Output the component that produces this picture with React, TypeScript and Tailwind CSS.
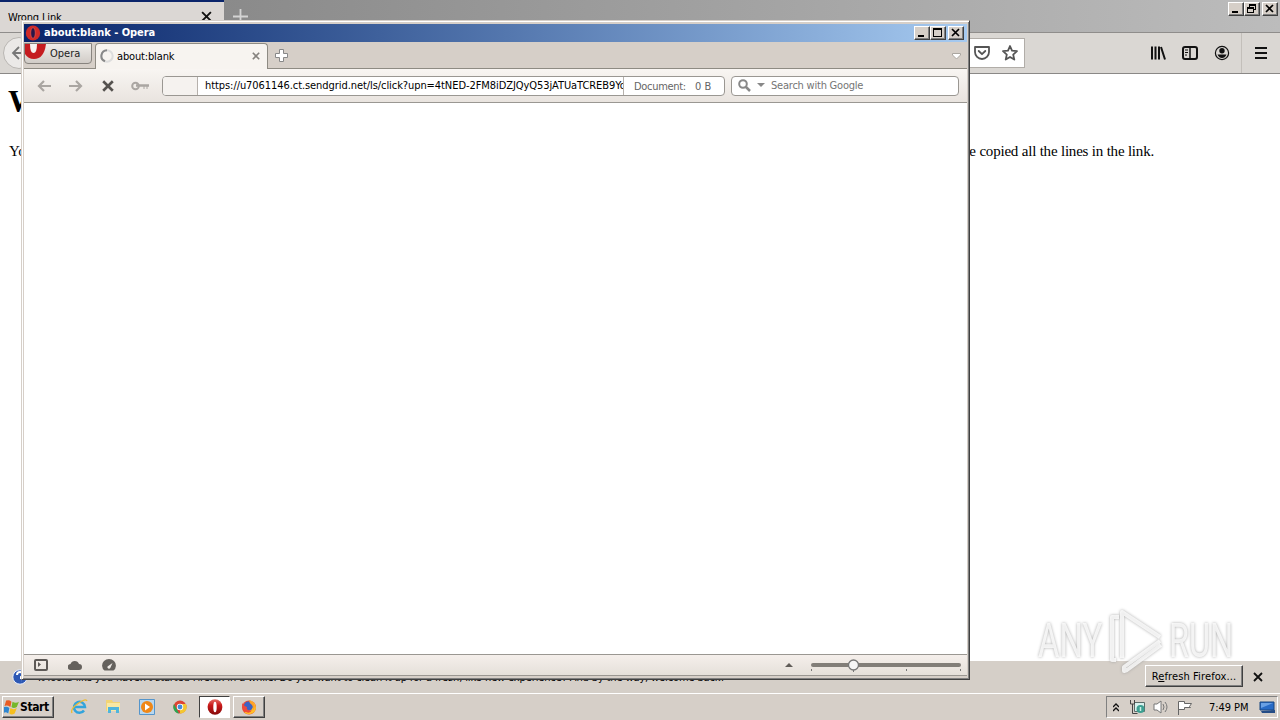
import React from "react";

const ui = "font-['DejaVu_Sans_Condensed','DejaVu_Sans',sans-serif] text-[11px] leading-[14px] whitespace-nowrap";

function CaptionButton({ kind, className = "" }: { kind: "min" | "max" | "restore" | "close"; className?: string }) {
  return (
    <span className={`block h-[14px] w-4 border border-t-white border-l-white border-r-[#404040] border-b-[#404040] bg-[#d6cfc8] shadow-[inset_-1px_-1px_0_#808080] ${className}`}>
      <svg width="14" height="12" viewBox="0 0 14 12" fill="none" stroke="#000" shapeRendering="crispEdges">
        {kind === "min" && <path d="M3 9h6" strokeWidth="2" />}
        {kind === "max" && <path d="M2.5 2.5h8v7h-8zM2 2h9" strokeWidth="1" />}
        {kind === "max" && <path d="M2 2h9" strokeWidth="2" />}
        {kind === "restore" && <path d="M4.5 4V1.5h6v5H9M4 2h7M2.5 4.5h6v5h-6zM2 5h7" />}
        {kind === "close" && <path d="M3 2l7 7M10 2L3 9" shapeRendering="auto" strokeWidth="1.700" />}
      </svg>
    </span>
  );
}

function Cross({ size, color, width }: { size: number; color: string; width: number }) {
  return (
    <svg width={size} height={size} viewBox="0 0 10 10" stroke={color} strokeWidth={width}>
      <path d="M1 1l8 8M9 1L1 9" />
    </svg>
  );
}

function OperaLogo({ size = 16 }: { size?: number }) {
  return (
    <svg width={size} height={size} viewBox="0 0 16 16">
      <defs>
        <linearGradient id="operaRed" x1="0" y1="0" x2="0" y2="1">
          <stop offset="0" stopColor="#e66b63" />
          <stop offset=".4" stopColor="#c81919" />
          <stop offset="1" stopColor="#850909" />
        </linearGradient>
      </defs>
      <ellipse cx="8" cy="8" rx="7.4" ry="7.7" fill="url(#operaRed)" />
      <ellipse cx="8" cy="8" rx="1.700" ry="5.3" fill="#fff" />
    </svg>
  );
}

function TitleOperaLogo() {
  return (
    <svg width="16" height="16" viewBox="0 0 16 16">
      <ellipse cx="8" cy="8" rx="7.2" ry="7.6" fill="#d02a28" />
      <ellipse cx="8" cy="8" rx="2.300" ry="5.400" fill="#2a1648" stroke="#e8594e" strokeWidth=".7" />
    </svg>
  );
}

function Firefox() {
  return (
    <section className="flex h-[693px] flex-col">
      <div className="flex h-8 shrink-0 bg-linear-to-r from-[#808080] to-[#bcbcbc]">
        <div className="flex w-56 border-t-2 border-[#0a246a] bg-[#dbd7d4] pt-2 pl-2">
          <span className={`${ui} w-[193px] pt-px tracking-[-0.15px] text-black`}>Wrong Link</span>
          <span className="pt-px"><Cross size={11} color="#111" width={1.7} /></span>
        </div>
        <svg className="mt-[9px] ml-[9px]" width="15" height="15" stroke="#d4d4d4" strokeWidth="1.8"><path d="M7.5 0v15M0 7.5h15" /></svg>
        <div className="ml-auto flex pt-[2px] pr-[2px]">
          <CaptionButton kind="min" /><CaptionButton kind="restore" /><CaptionButton kind="close" className="ml-[2px]" />
        </div>
      </div>
      <div className="flex h-[42px] shrink-0 items-center border-y border-t-[#8f8d8b] border-b-[#8a8886] bg-[#dad7d3]">
        <div className="ml-[3px] flex size-8 items-center justify-center rounded-full border border-[#b9b6b2] bg-[#ebe9e7]">
          <svg width="16" height="16" fill="none" stroke="#777" strokeWidth="1.8"><path d="M15 8H2M8 2L2 8l6 6" /></svg>
        </div>
        <div className="flex h-[30px] w-[990px] items-center justify-end border border-[#b1ada8] bg-white pr-[6px]">
          <svg width="16" height="16" viewBox="0 0 16 16" fill="none" stroke="#555" strokeWidth="1.8" strokeLinejoin="round" strokeLinecap="round"><path d="M1 2h14v5a7 7 0 0 1-14 0z" /><path d="M4.7 6L8 9.2 11.3 6" /></svg>
          <svg className="ml-3" width="16" height="16" viewBox="0 0 16 16" fill="none" stroke="#555" strokeWidth="1.8" strokeLinejoin="round"><path d="M8 1l2 4.7 5 .5-3.8 3.4 1.1 5L8 12l-4.3 2.6 1.1-5L1 6.2l5-.5z" /></svg>
        </div>
        <div className="ml-auto flex h-full items-center pr-3">
          <svg width="16" height="16" fill="none" stroke="#111" strokeWidth="2"><path d="M2 1.500v13M5.5 1.500v13M9 1.500v13M11 2L15 14.500" /></svg>
          <svg className="ml-4" width="16" height="16" fill="none" stroke="#111" strokeWidth="2"><rect x="1" y="2" width="14" height="12" rx="2" /><path d="M8 2v12" strokeWidth="1.5" /><path d="M3 5h3M3 7.5h3M3 10h2" strokeWidth="1" /></svg>
          <svg className="ml-4" width="16" height="16"><circle cx="8" cy="8" r="6.6" fill="none" stroke="#111" strokeWidth="1.2" /><circle cx="8" cy="5.8" r="2.7" fill="#111" /><path d="M3.5 9.500h9q-1.5 3.500-4.5 3.500t-4.500-3.500z" fill="#111" /></svg>
          <span className="ml-[11px] h-full border-l border-[#c3bfba]" />
          <svg className="ml-[13px]" width="13" height="14" stroke="#111" strokeWidth="2"><path d="M0 2h12M0 7h12M0 12h12" /></svg>
        </div>
      </div>
      <div className="flex h-[587px] shrink-0 flex-col bg-white font-['Liberation_Serif',serif] text-black">
        <h1 className="pt-[9px] pl-2 text-[32px] leading-[37px] font-bold">Wrong Link</h1>
        <div className="flex justify-between pt-[21px] pr-[126px] pl-[9px] text-[15px] leading-[20px]">
          <span>You have</span>
          <span className="tracking-[-0.2px]">have copied all the lines in the link.</span>
        </div>
      </div>
      <div className="flex h-8 items-start bg-[#d5cfc8] pl-3">
        <svg className="mt-2" width="16" height="16"><circle cx="8" cy="8" r="7.2" fill="#2d58b4" stroke="#e8eefb" /><path d="M5 6q0-3 3-3t3 3q0 1-2 2v2M9 12h.1" stroke="#fff" strokeWidth="2" fill="none" /></svg>
        <span className={`${ui} mt-[10px] ml-[10px] w-[690px] tracking-[-0.13px] text-black`}>It looks like you haven't started Firefox in a while. Do you want to clean it up for a fresh, like-new experience? And by the way, welcome back!</span>
        <span className={`${ui} mt-[4px] ml-auto flex h-[22px] w-[98px] items-center justify-center border border-t-white border-l-white border-r-[#404040] border-b-[#404040] pt-px text-black shadow-[inset_-1px_-1px_0_#808080]`}>
          <span className="tracking-[0.12px]">R<u>e</u>fresh Firefox...</span>
        </span>
        <span className="mt-[11px] mr-[17px] ml-[10px]"><Cross size={10} color="#111" width={1.8} /></span>
      </div>
    </section>
  );
}

function OperaWindow() {
  return (
    <section className="absolute top-5 left-[21px] flex h-[660px] w-[949px] flex-col border border-t-[#d6cfc8] border-l-[#d6cfc8] border-r-[#404040] border-b-[#404040] bg-[#d6cfc8] p-[2px] pt-[3px] pb-[3px] shadow-[inset_1px_1px_0_#fff,inset_-1px_-1px_0_#808080]">
      <div className="flex h-[18px] shrink-0 items-center bg-linear-to-r from-[#0a246a] to-[#a6caf0] pr-[3px] pl-px">
        <TitleOperaLogo />
        <span className={`${ui} ml-[3px] font-bold tracking-[-0.03px] text-white`}>about:blank - Opera</span>
        <div className="ml-auto flex"><CaptionButton kind="min" /><CaptionButton kind="max" /><CaptionButton kind="close" className="ml-[2px]" /></div>
      </div>
      <div className="flex h-[27px] shrink-0 border-b border-[#8e8b83] bg-[#d6cfc8]">
        <div className="mt-px flex h-[21px] w-[68px] rounded-b-[4px] border border-[#88847f] bg-linear-to-b from-[#f0eeeb] to-[#d1ccc7]">
          <svg width="22" height="19"><path d="M0 0h21Q19 15 9 15Q3 15 0 10z" fill="#c51c20" /><path d="M5 0h7q0 9-3.500 9T5 0z" fill="#f6f3f1" /></svg>
          <span className={`${ui} mt-[3px] ml-[3px] text-[#222]`}>Opera</span>
        </div>
        <div className="-mb-px ml-[3px] mt-px flex w-[173px] rounded-t-[4px] border border-b-0 border-[#8e8b83] bg-[#f7f4f0] pl-[4px]">
          <svg className="mt-[5px]" width="15" height="15" fill="none" strokeWidth="2"><circle cx="7" cy="7" r="5.700" stroke="#ddd" /><path d="M5 12.300A5.700 5.700 0 0 1 7 1.300" stroke="#888" /></svg>
          <span className={`${ui} mt-[6px] ml-[2px] w-[135px] tracking-[-0.15px] text-black`}>about:blank</span>
          <span className="mt-[8px]"><Cross size={8} color="#85827e" width={2} /></span>
        </div>
        <svg className="mt-[7px] ml-[7px]" width="13" height="13"><path d="M4.500.5h4v4h4v4h-4v4h-4v-4h-4v-4h4z" fill="#fff" stroke="#888" /></svg>
        <svg className="mt-[11px] mr-[6px] ml-auto" width="9" height="7"><path d="M.5.5h8v1.500l-4 4-4-4z" fill="#fff" stroke="#aaa6a0" /></svg>
      </div>
      <div className="flex h-[34px] shrink-0 items-center border-b border-[#9a9792] bg-linear-to-b from-[#f8f5f2] to-[#e9e4df] pr-[8px] pl-[13px]">
        <svg width="14" height="12" fill="none" stroke="#aaa6a2" strokeWidth="2.200"><path d="M14 6H2M7 1L2 6l5 5" /></svg>
        <svg className="ml-[18px]" width="14" height="12" fill="none" stroke="#aaa6a2" strokeWidth="2.200"><path d="M0 6h12M7 1l5 5-5 5" /></svg>
        <span className="ml-[19px]"><Cross size={12} color="#55524f" width={2.2} /></span>
        <svg className="ml-[17px]" width="19" height="10" fill="none" stroke="#aaa6a2" strokeWidth="2"><circle cx="4.500" cy="5" r="3.300" /><path d="M5 4.500h13" strokeWidth="2.500" /><path d="M13 5v3M16 5v3" strokeWidth="1" /></svg>
        <div className="ml-[12px] flex h-5 w-[563px] shrink-0 overflow-hidden rounded-[4px] border border-[#9a9792] bg-white">
          <span className="w-[35px] shrink-0 border-r border-[#b6b1ac] bg-[#f5f2ef]" />
          <span className={`${ui} ml-[7px] w-[418px] overflow-hidden pt-[2px] tracking-[-0.07px] text-black`}>https://u7061146.ct.sendgrid.net/ls/click?upn=4tNED-2FM8iDZJQyQ53jATUaTCREB9Yo</span>
          <span className={`${ui} flex flex-1 border-l border-[#b6b1ac] pt-[3px] pl-[10px] text-[#656565]`}><span className="w-[61px] tracking-[-0.3px]">Document:</span>0 B</span>
        </div>
        <div className="ml-[6px] flex h-5 w-[228px] shrink-0 items-center rounded-[4px] border border-[#9a9792] bg-white pl-[6px]">
          <svg width="13" height="13" fill="none" stroke="#888" strokeWidth="2"><circle cx="5" cy="5" r="3.800" /><path d="M8 8l4 4" strokeWidth="2.500" /></svg>
          <svg className="ml-[6px]" width="8" height="5"><path d="M0 0h8L4 4z" fill="#888" /></svg>
          <span className={`${ui} ml-[6px] pt-px tracking-[-0.22px] text-[#757575]`}>Search with Google</span>
        </div>
      </div>
      <div className="flex-1 bg-white" />
      <div className="flex h-[22px] shrink-0 items-center border-y border-[#9a9792] bg-linear-to-b from-[#f5efeb] to-[#e5e0da] pr-[5px] pl-[10px]">
        <svg width="14" height="12" fill="none" stroke="#5d5956" strokeWidth="2"><rect x="1" y="1" width="12" height="10" rx="1" /><path d="M4 3v5l3-2.500z" fill="#5d5956" stroke="none" /></svg>
        <svg className="ml-5" width="14" height="10"><path d="M3 10a3 3 0 0 1-.5-6A4.500 4.500 0 0 1 11 4a3 3 0 0 1 0 6z" fill="#65615d" /></svg>
        <svg className="ml-5" width="14" height="12"><path d="M2.500 11.500A6.900 6.500 0 1 1 11.500 11.500z" fill="#65615d" /><path d="M5.500 7.500L10.500 4 8.300 9A1.600 1.600 0 0 1 5.500 7.500z" fill="#eeeae6" /></svg>
        <svg className="ml-auto" width="8" height="5"><path d="M4 0l4 4H0z" fill="#605c58" /></svg>
        <svg className="ml-[17px]" width="152" height="16"><path d="M3 8h146" stroke="#827e79" strokeWidth="4" strokeLinecap="round" /><path d="M1.500 12v2M43.500 12v3M96.500 12v2M150.500 12v2" stroke="#777" /><circle cx="43.500" cy="8" r="5" fill="#f6f6f6" stroke="#777" strokeWidth="1.300" /></svg>
      </div>
    </section>
  );
}

function Taskbar() {
  return (
    <footer className="flex h-[27px] items-start border-t border-white bg-[#d6cfc8] pt-[2px] pl-[2px]">
      <div className="flex h-[22px] w-[52px] items-center border border-t-white border-l-white border-r-[#404040] border-b-[#404040] pl-[1px] shadow-[inset_-1px_-1px_0_#808080]">
        <svg width="16" height="16" viewBox="1 1 15 14"><path d="M3 2q3-1 5 1L7 8Q4 6 1.500 7z" fill="#e95c24" /><path d="M9 3q3 2 6 0l-2 5q-3 2-5 0z" fill="#75b72b" /><path d="M1 8q3-1 5 1l-1 5q-3-2-5 0z" fill="#2e86d1" /><path d="M7 9q3 2 6 0l-2 5q-3 2-5 0z" fill="#f6bf1f" /></svg>
        <span className={`${ui} text-[12px] font-bold tracking-[-0.4px] text-black`}>Start</span>
      </div>
      <svg className="mt-[3px] ml-[17px]" width="17" height="16" fill="none"><path d="M13 11.500A5.500 5.500 0 1 1 14 8H4" stroke="#32a4dc" strokeWidth="2.500" /><path d="M1 14Q-1 10 7 4.500T16 2" stroke="#eebb32" strokeWidth="1.300" /></svg>
      <svg className="mt-[2px] ml-[17px]" width="17" height="16"><path d="M1 2h6l1 2h7v9H1z" fill="#f2d475" /><path d="M2 5h13v8H2z" fill="#f9e8a3" /><path d="M3 15V9h11v6h-3v-3H6v3z" fill="#50b5dc" /></svg>
      <svg className="mt-[3px] ml-[17px]" width="16" height="16"><path d="M.5.5h15v15H.5z" fill="#b8d7ef" stroke="#5595cb" /><circle cx="8" cy="8" r="6" fill="#ef8717" /><path d="M6 4.500v7L11 8z" fill="#fff" /></svg>
      <svg className="mt-[4px] ml-[18px]" width="14" height="14"><circle cx="7" cy="7" r="6.500" fill="#dd4534" /><path d="M1 4l5 9.500A6.500 6.500 0 0 1 1 4z" fill="#2ba552" /><path d="M7 13.500A6.500 6.500 0 0 0 13 4H7z" fill="#f4c730" /><circle cx="7" cy="7" r="3.200" fill="#fff" /><circle cx="7" cy="7" r="2.400" fill="#438cda" /></svg>
      <div className="ml-3 flex h-[22px] w-[31px] items-center justify-center border border-t-[#404040] border-l-[#404040] border-r-white border-b-white bg-white"><OperaLogo /></div>
      <div className="ml-[3px] flex h-[22px] w-[32px] items-center justify-center border border-t-white border-l-white border-r-[#404040] border-b-[#404040] shadow-[inset_-1px_-1px_0_#808080]">
        <svg width="16" height="16"><circle cx="8" cy="8.500" r="7" fill="#ed4934" /><path d="M8 1q7 2 7 8a7 7 0 0 1-12 4q8 0 8-6z" fill="#ffbf27" /><circle cx="7.500" cy="7" r="4.500" fill="#3d62c4" /><path d="M1 4q2 3 5 4-1 2 1 3t4 0q-2 4-6 2T1 4z" fill="#f04a3c" /><path d="M8 1q0 3 3 5 2 3 0 6 4-3 2-7Q12 3 8 1z" fill="#ff9f27" /></svg>
      </div>
      <div className="mr-[2px] ml-auto flex h-[22px] w-[172px] items-center border border-t-[#808080] border-l-[#808080] border-r-white border-b-white pl-[6px]">
        <svg width="6" height="9" fill="none" stroke="#111" strokeWidth="1.300"><path d="M0 4l3-3 3 3M0 8l3-3 3 3" /></svg>
        <svg className="ml-[10px]" width="17" height="16"><path d="M5.500 3.500h10v9h-10z" fill="#d6f1ed" stroke="#5b6b69" /><circle cx="11.500" cy="10" r="4" fill="#3d9f91" /><path d="M11.500 8v4" stroke="#c9efe5" strokeWidth="1.500" /><path d="M1.500 1v4h4V1M3.500 5v9.500h5" fill="none" stroke="#444" /></svg>
        <svg className="ml-[7px]" width="16" height="14" fill="none" stroke="#777"><path d="M1 4h3l4-3v12L4 10H1z" fill="#fff" /><path d="M10 4q2 3 0 6M12 2q4 5 0 10" /></svg>
        <svg className="ml-[8px]" width="17" height="15" fill="#fff" stroke="#666"><path d="M1.500 15V1.500h6v2h7l-2 3 1 1h-6v2h-6" /></svg>
        <span className={`${ui} ml-[15px] pt-px tracking-[-0.05px] text-black`}>7:49 PM</span>
        <svg className="mr-px ml-auto" width="17" height="13"><path d="M1 1h14v8H1z" fill="#286bc6" stroke="#184680" /><path d="M2 2h12L2 7z" fill="#69a0e4" /><path d="M2 10l14-1v3H3z" fill="#244c86" /></svg>
      </div>
    </footer>
  );
}

function Watermark() {
  return (
    <div className="absolute top-[608px] left-[1038px] flex h-[65px] items-center font-['Roboto',sans-serif] text-[49px] leading-none font-normal text-white/80 [filter:drop-shadow(0_0_1.5px_#999)]">
      <span className="w-[69px]"><span className="inline-block origin-left scale-x-[.67]">ANY</span></span>
      <svg width="62" height="65" fill="none" stroke="#fff" strokeOpacity=".8" strokeWidth="4" strokeLinejoin="round"><path d="M15 50V4l38 25M12 9H5v43h4M15 4v46M53 33L17 59v4l3-1 34-25" /></svg>
      <span className="w-[70px]"><span className="inline-block origin-left scale-x-[.66]">RUN</span></span>
    </div>
  );
}

export default function App() {
  return (
    <main className="relative h-[720px] w-[1280px] overflow-hidden bg-[#d6cfc8]">
      <Firefox />
      <Taskbar />
      <OperaWindow />
      <Watermark />
    </main>
  );
}
